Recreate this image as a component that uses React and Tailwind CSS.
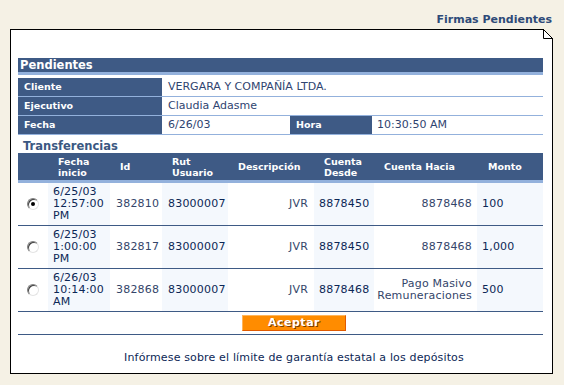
import React from 'react';

const rows = [
  { fecha: ['6/25/03', '12:57:00', 'PM'], id: '382810', rut: '83000007', desc: 'JVR', desde: '8878450', hacia: ['8878468'], monto: '100', checked: true },
  { fecha: ['6/25/03', '1:00:00', 'PM'], id: '382817', rut: '83000007', desc: 'JVR', desde: '8878450', hacia: ['8878468'], monto: '1,000' },
  { fecha: ['6/26/03', '10:14:00', 'AM'], id: '382868', rut: '83000007', desc: 'JVR', desde: '8878468', hacia: ['Pago Masivo', 'Remuneraciones'], monto: '500' },
];

const Radio = ({ checked }) => (
  <span className="relative block w-[12px] h-[12px] rounded-full bg-white border border-t-[#808080] border-l-[#808080] border-r-[#e4e4e4] border-b-[#e4e4e4] shadow-[inset_1px_1px_0_#404040]">
    {checked && <span className="absolute left-[3px] top-[3px] w-[4px] h-[4px] rounded-full bg-black" />}
  </span>
);

const InfoLabel = ({ children }) => (
  <div className="bg-[#3e5a85] text-white font-bold text-[9.5px] leading-[18px] pl-[6px]">{children}</div>
);

const InfoValue = ({ children }) => (
  <div className="text-[#2f4470] text-[11px] leading-[18px] pl-[6px] whitespace-nowrap">{children}</div>
);

const cols = 'grid grid-cols-[30px_62px_52px_66px_86px_60px_103px_66px]';

export default function App() {
  return (
    <div className="min-h-[385px] bg-[#f5f1e5] font-['DejaVu_Sans','Verdana',sans-serif] pt-[13px]">
      <div className="pr-[12px] text-right text-[11px] leading-[13px] font-bold text-[#2e4a78]">Firmas Pendientes</div>

      <div className="relative ml-[10px] mt-[3px] w-[543px] h-[345px] bg-white border border-black">
        <svg className="absolute -top-px -right-px" width="11" height="11" viewBox="0 0 11 11">
          <polygon points="1,0 11,0 11,10" fill="#f5f1e5" />
          <path d="M1.5 0.5 L10.5 9.5 M1.5 0 V9.5 H11" stroke="#000" strokeWidth="1" fill="none" />
        </svg>

        <div className="ml-[7px] w-[525px] pt-[28px]">
          <div className="bg-[#3e5a85] border-b-[3px] border-[#93b1dc] text-white font-bold text-[11.5px] leading-[14px] pl-[2px]">
            Pendientes
          </div>

          <div className="mt-[3px]">
            <div className="grid grid-cols-[144px_1fr] border-b border-[#93b1dc]">
              <InfoLabel>Cliente</InfoLabel>
              <InfoValue>VERGARA Y COMPAÑÍA LTDA.</InfoValue>
            </div>
            <div className="grid grid-cols-[144px_1fr] border-b border-[#93b1dc]">
              <InfoLabel>Ejecutivo</InfoLabel>
              <InfoValue>Claudia Adasme</InfoValue>
            </div>
            <div className="grid grid-cols-[144px_128px_82px_1fr] border-b border-[#93b1dc]">
              <InfoLabel>Fecha</InfoLabel>
              <InfoValue>6/26/03</InfoValue>
              <InfoLabel>Hora</InfoLabel>
              <div className="text-[#2f4470] text-[11px] leading-[18px] pl-[5px]">10:30:50 AM</div>
            </div>
          </div>

          <div className="h-[18px] pt-[4px] pl-[5px] text-[11.5px] leading-[14px] font-bold text-[#3b5882]">Transferencias</div>

          <div className={`${cols} h-[30px] bg-[#3e5a85] border-b-[3px] border-[#93b1dc] text-white font-bold text-[9.5px] leading-[11px]`}>
            <div />
            <div className="flex items-center pl-[10px]">Fecha<br />inicio</div>
            <div className="flex items-center pl-[10px]">Id</div>
            <div className="flex items-center pl-[10px]">Rut<br />Usuario</div>
            <div className="flex items-center pl-[10px]">Descripción</div>
            <div className="flex items-center pl-[10px]">Cuenta<br />Desde</div>
            <div className="flex items-center pl-[10px]">Cuenta Hacia</div>
            <div className="flex items-center pl-[11px]">Monto</div>
          </div>

          {rows.map((r, i) => (
            <div key={i} className={`${cols} h-[43px] border-b border-[#3e5a85] text-[11px] leading-[12px] tracking-[0.2px]`}>
              <div className="flex items-center justify-center"><Radio checked={r.checked} /></div>
              <div className="flex flex-col justify-center pl-[5px] bg-[#f4f8fd] text-[#0c2756]">
                {r.fecha.map(f => <div key={f}>{f}</div>)}
              </div>
              <div className="flex items-center pl-[6px] text-[#34456a]">{r.id}</div>
              <div className="flex items-center pl-[6px] bg-[#f4f8fd] text-[#0c2756]">{r.rut}</div>
              <div className="flex items-center justify-end pr-[6px] text-[#34456a]">{r.desc}</div>
              <div className="flex items-center pl-[5px] bg-[#f4f8fd] text-[#0c2756]">{r.desde}</div>
              <div className="flex flex-col justify-center items-end pr-[5px] text-[#34456a]">
                {r.hacia.map(h => <div key={h}>{h}</div>)}
              </div>
              <div className="flex items-center pl-[5px] bg-[#f4f8fd] text-[#0c2756]">{r.monto}</div>
            </div>
          ))}

          <div className="flex justify-center pl-[27px] pt-[3px] pb-[3px] border-b border-[#3e5a85]">
            <button className="w-[104px] h-[16px] bg-[#ff8c00] border border-t-[#ffb55a] border-l-[#ffb55a] border-r-[#e05a00] border-b-[#e05a00] text-white font-bold text-[11px] leading-[14px] tracking-[0.5px] [text-shadow:1px_1px_0_#7a3a00]">
              Aceptar
            </button>
          </div>

          <div className="pl-[27px] pt-[16px] text-center text-[11px] leading-[13px] tracking-[0.15px] text-[#0c2756]">
            Infórmese sobre el límite de garantía estatal a los depósitos
          </div>
        </div>
      </div>
    </div>
  );
}
